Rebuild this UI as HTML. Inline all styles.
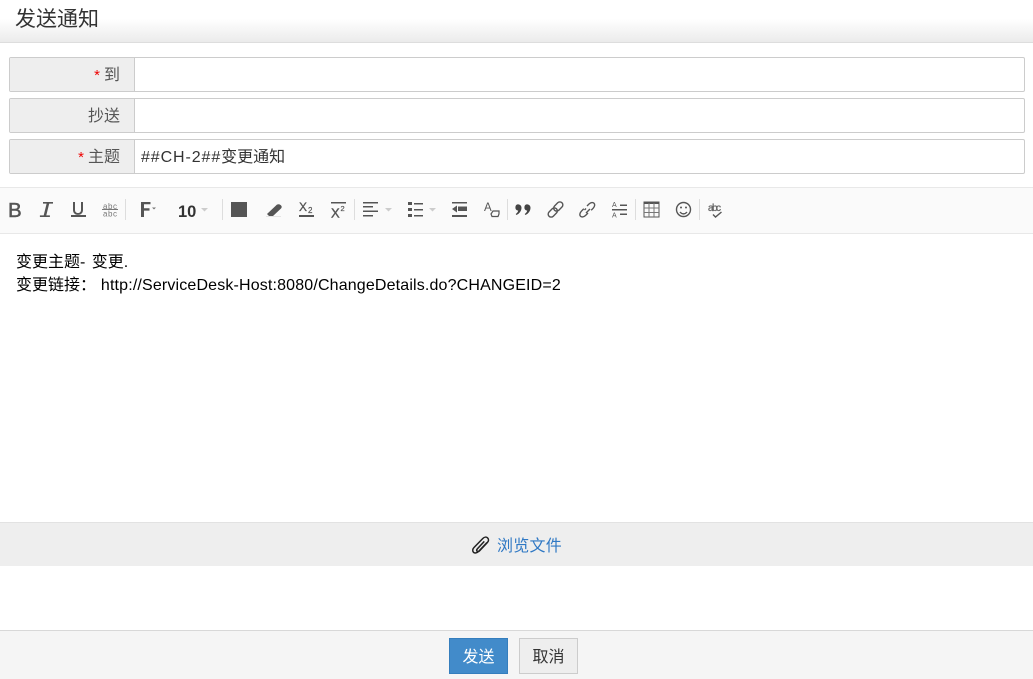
<!DOCTYPE html>
<html lang="zh"><head><meta charset="utf-8"><title>发送通知</title>
<style>
html,body{margin:0;padding:0;background:#fff}
body{width:1033px;height:679px;position:relative;overflow:hidden;font-family:"Liberation Sans","Noto Sans CJK SC",sans-serif;color:#333}
.a{position:absolute}
.hd{left:0;top:0;width:1033px;height:42px;background:linear-gradient(#fff 0,#fff 45%,#ebebeb 100%);border-bottom:1px solid #ddd}
.hd span{position:absolute;left:15px;top:6px;font-size:21px;line-height:28px;color:#333}
.row{left:9px;width:1014px;height:33px;border:1px solid #ccc;border-radius:2px;background:#fff}
.lb{position:absolute;left:0;top:0;width:110px;height:33px;padding-right:14px;background:#eee;border-right:1px solid #ccc;text-align:right;font-size:16px;line-height:35px;color:#555;border-radius:2px 0 0 2px}
.lb i{font-style:normal;color:#e00;margin-right:4px;font-size:15px}
.val{position:absolute;left:131px;top:0;font-size:16px;line-height:35px;color:#333;white-space:pre}
.val b{font-weight:400;letter-spacing:.9px}
.tb{left:0;top:187px;width:1033px;height:45px;background:#fafafa;border-top:1px solid #e8e8e8;border-bottom:1px solid #e8e8e8}
.sep{position:absolute;top:199px;width:1px;height:21px;background:#ddd}
.ed{left:16px;top:251px;font-size:16px;line-height:23px;color:#000;white-space:pre}
.ed b{font-weight:400;letter-spacing:.155px;margin-left:-4px}
.ed u{text-decoration:none;margin-left:2px}
.att{left:0;top:522px;width:1033px;height:43px;background:#eee;border-top:1px solid #e2e2e2}
.att span{position:absolute;left:497px;top:12px;font-size:16px;letter-spacing:.25px;line-height:24px;color:#2f78c4}
.ft{left:0;top:630px;width:1033px;height:48px;background:#f5f5f5;border-top:1px solid #d8d8d8}
.btn{top:638px;height:34px;width:57px;text-align:center;font-size:16px;line-height:37px;border:1px solid}
svg{position:absolute;left:0;top:187px}
svg text{font-family:"Liberation Sans",sans-serif}
</style></head><body>
<div class="a hd"><span>发送通知</span></div>
<div class="a row" style="top:57px"><div class="lb"><i>*</i>到</div></div>
<div class="a row" style="top:98px"><div class="lb">抄送</div></div>
<div class="a row" style="top:139px"><div class="lb"><i>*</i>主题</div><div class="val"><b>##CH-2##</b>变更通知</div></div>
<div class="a tb"></div>
<svg width="760" height="47" viewBox="0 187 760 47" fill="none">
<g fill="#555" stroke="none">
<text x="8" y="217" font-size="20.500" fill="#555" stroke="#555" stroke-width=".5">B</text>
<path d="M43 202h10v1.600h-3.800l-2.900 11.800h3.600v1.600h-10v-1.600h3.800l2.900-11.800h-3.600z"/>
<path d="M73 202h2v8c0 4 6 4 6 0v-8h2v8c0 6.500-10 6.500-10 0z"/><rect x="71" y="215" width="15" height="2"/>
<text x="103" y="209" font-size="8" fill="#777" textLength="14">abc</text>
<rect x="102" y="209" width="16" height="1" fill="#777"/>
<text x="103" y="216.500" font-size="8" fill="#777" textLength="14">abc</text>
<path d="M141 202h9.500v2.300h-6.500v4h5.500v2.300h-5.500v6.400h-3z"/><path d="M152 207.500h4l-2 2z" fill="#777"/>
<text x="178" y="217" font-size="16.500" font-weight="700" fill="#333">10</text>
<path d="M201 208h7l-3.500 3.500z" fill="#ccc"/>
<rect x="231" y="202" width="16" height="15"/>
<path d="M267 214l9-8.500c1.500-1.500 3-1.500 4.500-.5s1.500 2.500.5 3.500l-8 7.500h-4z"/><rect x="266" y="216" width="15" height="1" fill="#e4e4e4"/>
<text x="299" y="211" font-size="12" fill="#555" stroke="#555" stroke-width=".3">X</text><text x="308" y="213" font-size="8" fill="#555" stroke="#555" stroke-width=".2">2</text><rect x="299" y="215" width="15" height="2"/>
<rect x="331" y="202" width="15" height="1.500"/><text x="331" y="217.500" font-size="13" fill="#555" stroke="#555" stroke-width=".4">X</text><text x="340.500" y="211" font-size="7.500" fill="#555" stroke="#555" stroke-width=".2">2</text>
<rect x="363" y="202" width="15" height="1.500"/><rect x="363" y="206" width="10" height="1.500"/><rect x="363" y="210.500" width="15" height="1.500"/><rect x="363" y="215" width="10" height="1.500"/>
<path d="M385 208h7l-3.500 3.500z" fill="#ccc"/>
<rect x="408" y="202" width="4" height="3"/><rect x="408" y="208" width="4" height="3"/><rect x="408" y="214" width="4" height="3"/>
<rect x="414" y="203" width="9" height="1.500"/><rect x="414" y="209" width="9" height="1.500"/><rect x="414" y="215" width="9" height="1.500"/>
<path d="M429 208h7l-3.500 3.500z" fill="#ccc"/>
<rect x="452" y="202" width="15" height="1.500"/><rect x="452" y="215" width="15" height="2"/><path d="M452 209l5-3.500v7z"/><rect x="458" y="206.500" width="9" height="4.500"/>
<text x="484" y="211" font-size="11.500" fill="#555">A</text>
<path d="M491 214l2-3h6v3l-1 2.500h-6z" stroke="#555" stroke-width="1.200" fill="none"/>
<path d="M517 204.500c2.300-.5 4.500.8 4.500 3.300 0 3-2 6-5 7.200l-.8-1c1.500-1 2.300-2.200 2.500-3.500-1.800 0-2.800-1.200-2.800-3 0-1.300.5-2.600 1.600-3zM526 204.500c2.300-.5 4.500.8 4.500 3.300 0 3-2 6-5 7.200l-.8-1c1.500-1 2.300-2.200 2.500-3.500-1.800 0-2.800-1.200-2.800-3 0-1.300.5-2.600 1.600-3z" fill="#444"/>
<rect x="620" y="204.500" width="7" height="1.500"/><rect x="612" y="209" width="15" height="1.500"/><rect x="620" y="213.500" width="7" height="1.500"/>
<text x="612" y="207" font-size="7" fill="#555" textLength="6">A</text><text x="612" y="217.500" font-size="7" fill="#555" textLength="6">A</text>
<rect x="644" y="202" width="15" height="15" fill="none" stroke="#555" stroke-width="1"/>
<rect x="644" y="202" width="15" height="2"/>
<path d="M644 208h15M644 212.500h15M649 203v14M654 203v14" stroke="#777" stroke-width="1" fill="none"/>
<text x="708" y="211" font-size="10" fill="#666" stroke="#666" stroke-width=".3" textLength="13">abc</text>
</g>
<g stroke="#555" stroke-width="1.400" fill="none">
<rect x="547.500" y="209.500" width="10.500" height="6" rx="3" transform="rotate(-45 552.750 212.500)"/>
<rect x="553" y="203.500" width="10.500" height="6" rx="3" transform="rotate(-45 558.250 206.500)"/>
<path d="M587 206l2-2c2-1.800 4-1.800 5-.8s1 3-.8 5l-2 2M588 213l-2.500 2.500c-2 1.800-4 1.800-5 .8s-1-3 .8-5l2.500-2.500"/>
<path d="M586 208.500l-1.500 1.500M590 209l-4 4"/>
<circle cx="683.500" cy="209.500" r="7"/>
<path d="M680 212c2 2.500 5 2.500 7 0"/>
<path d="M713 214.500l2.500 2.500 6-5" stroke="#555"/>
</g>
<circle cx="681" cy="207.500" r="1" fill="#555"/><circle cx="686" cy="207.500" r="1" fill="#555"/>
</svg>
<div class="sep" style="left:125px"></div>
<div class="sep" style="left:222px"></div>
<div class="sep" style="left:354px"></div>
<div class="sep" style="left:507px"></div>
<div class="sep" style="left:635px"></div>
<div class="sep" style="left:699px"></div>
<div class="a ed">变更主题- <u>变更.</u>
变更链接：  <b>http://ServiceDesk-Host:8080/ChangeDetails.do?CHANGEID=2</b></div>
<div class="a att"><span>浏览文件</span>
<svg style="left:471px;top:13px" width="20" height="20" viewBox="0 0 20 20" fill="none" stroke="#222" stroke-width="1.500"><path d="M16 6.500l-8.500 9c-1.500 1.500-3.800 2-5 .8s-1-3.300.5-4.800l8.800-9c1.500-1.500 3.500-1.800 4.800-.6s1.200 3-.2 4.600l-8 8.500c-.8.800-1.700.8-2.300.2s-.5-1.500.2-2.300l7-7.500"/></svg>
</div>
<div class="a ft"></div>
<div class="a btn" style="left:449px;background:#428bca;border-color:#357ebd;color:#fff">发送</div>
<div class="a btn" style="left:519px;background:#eee;border-color:#ccc;color:#333">取消</div>
</body></html>
